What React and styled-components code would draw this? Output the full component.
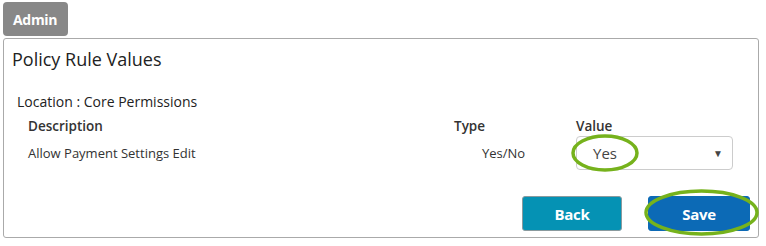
import React from "react";
import styled, { createGlobalStyle } from "styled-components";

const GlobalStyle = createGlobalStyle`
    html, body {
        margin: 0;
        padding: 0;
        background: #fff;
    }
    body {
        font-family: "Open Sans", "Liberation Sans", sans-serif;
        color: #333;
    }
`;

const Page = styled.div`
    padding: 2px 7px 0 3px;
`;

const Tab = styled.div`
    display: inline-flex;
    align-items: center;
    height: 34px;
    padding: 0 11px 0 10px;
    background: #888;
    color: #fff;
    font-weight: 700;
    font-size: 14px;
    border-radius: 4px;
    letter-spacing: -0.3px;
`;

const Panel = styled.div`
    margin-top: 2px;
    border: 1px solid #aaa;
    border-radius: 3px;
    height: 200px;
    box-sizing: border-box;
    padding: 8px 8px 0 8px;
`;

const Title = styled.h2`
    margin: 0;
    font-size: 18px;
    line-height: 24px;
    font-weight: 400;
    color: #222;
`;

const Location = styled.div`
    margin: 21px 0 0 5px;
    font-size: 14px;
    line-height: 20px;
    color: #222;
`;

const Grid = styled.div`
    display: grid;
    grid-template-columns: 426px 122px 157px;
    padding-left: 16px;
    margin-top: 4px;
`;

const Head = styled.div`
    font-size: 13.5px;
    font-weight: 600;
    line-height: 20px;
    color: #333;
`;

const Cell = styled.div`
    font-size: 13px;
    line-height: 34px;
    height: 34px;
    color: #333;
    padding-left: ${(p) => p.$indent || 0}px;
`;

const SelectWrap = styled.div`
    position: relative;
    height: 34px;
    box-sizing: border-box;
    border: 1px solid #ccc;
    border-radius: 4px;
    display: flex;
    align-items: center;
    justify-content: space-between;
    padding: 0 9px 0 16px;
    font-size: 15px;
    color: #444;
    background: #fff;
`;

const Caret = styled.span`
    font-size: 10px;
    color: #444;
`;

const Ring = styled.svg`
    position: absolute;
    pointer-events: none;
    overflow: visible;
`;

const Actions = styled.div`
    display: flex;
    justify-content: flex-end;
    gap: 26px;
    margin-top: 26px;
`;

const Button = styled.button`
    position: relative;
    width: ${(p) => p.$w}px;
    height: 35px;
    border: 1px solid ${(p) => p.$border};
    border-radius: 3px;
    background: ${(p) => p.$bg};
    color: #fff;
    font-family: inherit;
    font-weight: 700;
    font-size: 15px;
    letter-spacing: -0.3px;
    cursor: pointer;
`;

// green annotation ellipse drawn over the control
const GreenRing = ({ left, top, width, height }) => (
    <Ring style={{ left, top, width, height }} viewBox={`0 0 ${width} ${height}`}>
        <ellipse
            cx={width / 2}
            cy={height / 2}
            rx={width / 2 - 2}
            ry={height / 2 - 2}
            fill="none"
            stroke="#76b21c"
            strokeWidth="3.5"
        />
    </Ring>
);

export default function App() {
    return (
        <>
            <GlobalStyle />
            <Page>
                <Tab>Admin</Tab>
                <Panel>
                    <Title>Policy Rule Values</Title>
                    <Location>Location : Core Permissions</Location>
                    <Grid>
                        <Head>Description</Head>
                        <Head>Type</Head>
                        <Head>Value</Head>
                        <Cell>Allow Payment Settings Edit</Cell>
                        <Cell $indent={28}>Yes/No</Cell>
                        <SelectWrap>
                            <span>Yes</span>
                            <Caret>▼</Caret>
                            <GreenRing left={-6} top={-3} width={68} height={38} />
                        </SelectWrap>
                    </Grid>
                    <Actions>
                        <Button $w={100} $bg="#0592b4" $border="#8a9a9e">Back</Button>
                        <Button $w={102} $bg="#0c6ab6" $border="#0c6ab6">
                            Save
                            <GreenRing left={-5} top={-8} width={115} height={47} />
                        </Button>
                    </Actions>
                </Panel>
            </Page>
        </>
    );
}
